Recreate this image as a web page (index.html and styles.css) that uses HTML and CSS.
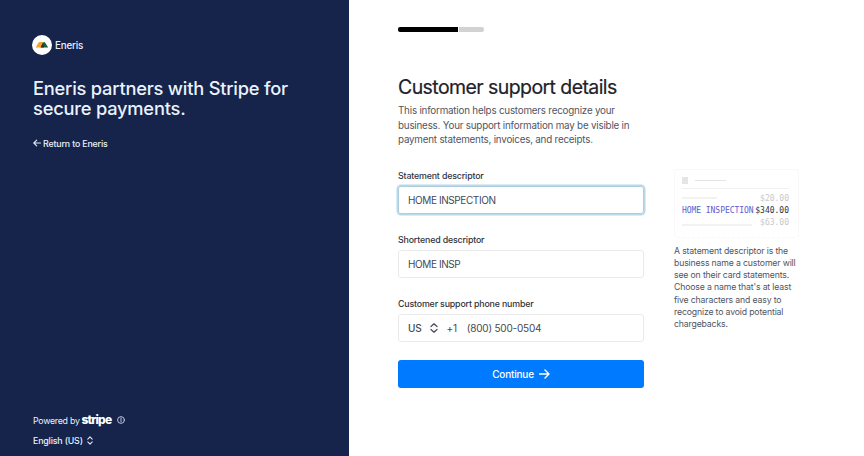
FILE: index.html
```html
<!DOCTYPE html>
<html lang="en">
<head>
<meta charset="utf-8">
<title>Customer support details</title>
<link rel="stylesheet" href="styles.css">
</head>
<body>
<div class="page">
  <aside class="sidebar">
    <div class="brand">
      <svg class="brand-logo" viewBox="0 0 20 20" width="20" height="20">
        <circle cx="10" cy="10" r="10" fill="#fff"/>
        <path d="M3.6 12.5 6.4 7.8Q7 7 7.9 7H12L9 12.5Z" fill="#f3a32f"/>
        <path d="M9 12.5 11.3 7.6Q12.3 6.4 13.2 7.8L16.2 12.5Z" fill="#17613f"/>
        <path d="M8.5 12.5 11 7.5 11.8 12.5Z" fill="#3b2a1c"/>
      </svg>
      <span>Eneris</span>
    </div>
    <h2 class="pitch">Eneris partners with Stripe for<br>secure payments.</h2>
    <a class="return">
      <svg viewBox="0 0 8 8" width="8" height="8"><path d="M7.5 4H1M3.7 1.1.8 4l2.9 2.9"/></svg>
      <span>Return to Eneris</span>
    </a>
    <footer class="footer">
      <div class="powered">
        <span>Powered by</span><b class="stripe">stripe</b>
        <svg viewBox="0 0 8 8" width="8" height="8"><circle cx="4" cy="4" r="3.4"/><path d="M4 3.5v2.3M4 2v.8"/></svg>
      </div>
      <div class="language">
        <span>English (US)</span>
        <svg viewBox="0 0 6 9" width="6" height="9"><path d="M.8 3.1 3 .9l2.2 2.2M.8 5.9 3 8.1l2.2-2.2"/></svg>
      </div>
    </footer>
  </aside>

  <main class="main">
    <form class="form">
      <div class="progress"><i class="done"></i><i class="left"></i></div>
      <h1>Customer support details</h1>
      <p class="intro">This information helps customers recognize your<br>business. Your support information may be visible in<br>payment statements, invoices, and receipts.</p>
      <label>Statement descriptor</label>
      <div class="field focused">HOME INSPECTION</div>
      <label>Shortened descriptor</label>
      <div class="field">HOME INSP</div>
      <label>Customer support phone number</label>
      <div class="field phone">
        <span class="country">US</span>
        <svg viewBox="0 0 8 10" width="8" height="10"><path d="M1 3.5 4 .8l3 2.7M1 6.5l3 2.7 3-2.7"/></svg>
        <span class="code">+1</span>
        <span class="number">(800) 500-0504</span>
      </div>
      <div class="button">
        <span>Continue</span>
        <svg viewBox="0 0 11 10" width="11" height="10"><path d="M.5 5h9M6 1l4 4-4 4"/></svg>
      </div>
    </form>

    <section class="help">
      <div class="receipt">
        <div class="receipt-head"><i class="mark"></i><i class="line"></i></div>
        <div class="row faded"><i class="item"></i><span>$20.00</span></div>
        <div class="row"><span class="name">HOME INSPECTION</span><span>$340.00</span></div>
        <div class="row faded"><i class="item long"></i><span>$63.00</span></div>
      </div>
      <p>A statement descriptor is the<br>business name a customer will<br>see on their card statements.<br>Choose a name that's at least<br>five characters and easy to<br>recognize to avoid potential<br>chargebacks.</p>
    </section>
  </main>
</div>
</body>
</html>
```
FILE: styles.css
```css
* { box-sizing: border-box; }
body {
  margin: 0;
  background: #fff;
  font-family: Inter, "Liberation Sans", sans-serif;
  color: #1e2129;
}
svg { flex: none; }
svg path, .powered circle { stroke-linecap: round; stroke-linejoin: round; }
.page { display: flex; width: 864px; height: 456px; overflow: hidden; }

.sidebar {
  display: flex;
  flex-direction: column;
  width: 349px;
  padding: 35px 33px 10px;
  background: #16234b;
  color: #eaf2fb;
}
.brand {
  display: flex;
  align-items: center;
  gap: 3px;
  height: 20px;
  margin-left: -1px;
  font-size: 9.8px;
  font-weight: 500;
  letter-spacing: -0.2px;
}
.pitch {
  margin: 24px 0 0;
  font-size: 18.3px;
  font-weight: 500;
  line-height: 19.5px;
  letter-spacing: -0.22px;
  white-space: nowrap;
}
.return {
  display: flex;
  align-items: center;
  gap: 2px;
  height: 12px;
  margin-top: 19px;
  font-size: 8.8px;
  font-weight: 500;
  letter-spacing: -0.15px;
}
.sidebar svg:not(.brand-logo) { fill: none; stroke: #dfe9f6; stroke-width: 1.1; }
.footer { margin-top: auto; font-size: 8.8px; letter-spacing: -0.15px; }
.powered { display: flex; align-items: center; height: 14px; letter-spacing: -0.26px; }
.stripe {
  margin: -1px 6px 0 2px;
  color: #fff;
  font-size: 12px;
  font-weight: 800;
  line-height: 14px;
  letter-spacing: -0.85px;
}
.sidebar .powered svg { stroke-width: 0.8; }
.language {
  display: flex;
  align-items: center;
  gap: 4px;
  height: 12px;
  margin-top: 7px;
  font-weight: 500;
}

.main { display: flex; flex: 1; padding-left: 49px; }
.form { width: 246px; }
.progress { display: flex; gap: 1px; height: 5px; margin-top: 27px; }
.done { width: 60px; background: #000; border-radius: 2px 0 0 2px; }
.left { width: 25px; background: #d2d2d4; border-radius: 0 2px 2px 0; }
h1 {
  margin: 42px 0 0;
  font-size: 19.5px;
  font-weight: 400;
  line-height: 26px;
  letter-spacing: -0.58px;
  white-space: nowrap;
  -webkit-text-stroke: 0.2px #1e2129;
}
.intro {
  margin: 4px 0 21.5px;
  color: #50555f;
  font-size: 9.8px;
  line-height: 14.67px;
  letter-spacing: -0.2px;
  white-space: nowrap;
}
label {
  display: block;
  height: 12px;
  margin-bottom: 4px;
  color: #30333b;
  font-size: 8.8px;
  font-weight: 500;
  line-height: 12px;
  letter-spacing: -0.15px;
}
.field {
  display: flex;
  align-items: center;
  height: 28px;
  margin-bottom: 20px;
  padding-left: 9px;
  border: 1px solid #ebebed;
  border-radius: 3px;
  color: #454952;
  font-size: 10px;
  letter-spacing: -0.4px;
}
.focused { border-color: #abcfe1; box-shadow: 0 0 0 1.5px #b9d8e8; }
.phone { margin-bottom: 18px; letter-spacing: -0.2px; }
.phone svg { margin: 0 8px 0 9px; fill: none; stroke: #454952; stroke-width: 1.2; }
.country { font-weight: 500; }
.number { margin-left: 10px; }
.button {
  display: flex;
  align-items: center;
  justify-content: center;
  gap: 5px;
  height: 28px;
  border-radius: 3px;
  background: #007aff;
  color: #fff;
  font-size: 10px;
  font-weight: 500;
  letter-spacing: -0.2px;
}
.button svg { fill: none; stroke: #fff; stroke-width: 1.4; }

.help { width: 125px; margin: 169px 0 0 30px; }
.receipt {
  height: 69px;
  padding: 7px 9px 0 7px;
  border: 1px solid #f8f8f9;
  border-bottom-style: dashed;
  border-radius: 4px;
  font-family: "DejaVu Sans Mono", monospace;
  font-size: 8px;
}
.receipt-head {
  display: flex;
  align-items: center;
  gap: 7px;
  height: 12px;
  padding-bottom: 4px;
  border-bottom: 1px solid #f0f0f1;
}
.mark { width: 6px; height: 7px; background: #e5e5e6; }
.line { width: 31px; height: 1px; background: #e4e4e6; }
.row {
  display: flex;
  align-items: center;
  justify-content: space-between;
  height: 12.3px;
  color: #303137;
  white-space: nowrap;
}
.receipt-head + .row { margin-top: 3px; }
.faded { color: #c9c9cc; }
.name { color: #5d5bd0; letter-spacing: -0.05px; }
.item { width: 35px; height: 2px; background: #f2f2f3; }
.long { width: 70px; margin-top: 5px; }
.help p {
  margin: 6.5px 0 0;
  color: #50555f;
  font-size: 8.7px;
  line-height: 12.3px;
  letter-spacing: -0.15px;
  white-space: nowrap;
}
```
